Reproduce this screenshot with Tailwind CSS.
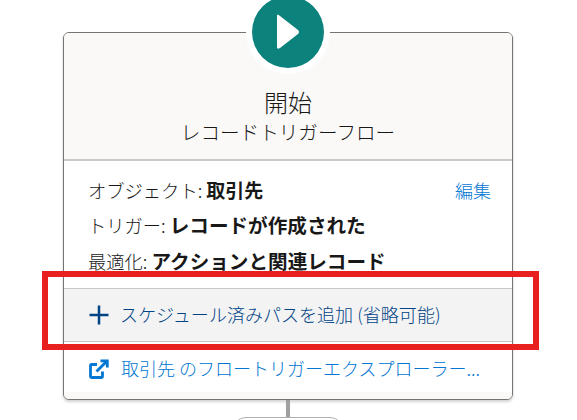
<!DOCTYPE html>
<html lang="ja">
<head>
<meta charset="utf-8">
<script src="https://cdn.jsdelivr.net/npm/@tailwindcss/browser@4"></script>
</head>
<body class="bg-white">
<div class="relative w-[577px] h-[420px] overflow-hidden bg-white text-[#181818] font-['Noto_Sans_CJK_JP','Noto_Sans',sans-serif]">
  <div class="pt-8 pl-[63px]">
    <div class="w-[450px] h-[368px] rounded-md border border-[#747474] bg-white shadow-[0_2px_3px_rgba(0,0,0,0.18)] overflow-hidden flex flex-col">
      <div class="h-[128px] shrink-0 bg-[#faf9f7] border-b-2 border-[#c9c9c9] flex flex-col items-center pt-[54px]">
        <div class="text-[24px] leading-[30px] font-light">開始</div>
        <div class="text-[19.6px] leading-[29px] font-light">レコードトリガーフロー</div>
      </div>
      <div class="h-[127px] shrink-0 pl-6 pr-[21px] pt-[12px] flex flex-col">
        <div class="flex justify-between items-center h-[34px]">
          <div class="text-[18.3px] font-light">オブジェクト: <b class="font-bold text-[19px]">取引先</b></div>
          <span class="text-[18px] text-[#0176d3] font-light">編集</span>
        </div>
        <div class="text-[18.3px] h-[35px] leading-[35px] font-light">トリガー: <b class="font-bold text-[19.6px]">レコードが作成された</b></div>
        <div class="text-[18.3px] h-[35px] leading-[37px] font-light">最適化: <b class="font-bold text-[19.6px]">アクションと関連レコード</b></div>
      </div>
      <div class="h-[54px] shrink-0 bg-[#f3f3f3] border-y border-[#c9c9c9] flex items-center pl-[25px] gap-[11px] text-[#014486]">
        <svg class="w-5 h-5 shrink-0" viewBox="0 0 20 20"><path d="M10 .5v19M.5 10h19" stroke="#014486" stroke-width="2.5" fill="none"/></svg>
        <span class="text-[18.05px] font-light">スケジュール済みパスを追加 (省略可能)</span>
      </div>
      <div class="flex-1 flex items-start pl-[25px] pt-[13px] gap-[12px] text-[#0176d3]">
        <svg class="w-5 h-5 mt-[4px] shrink-0" viewBox="0 0 20 20" fill="none" stroke="#0176d3" stroke-width="2.8"><path d="M8 5.5H2.5a1 1 0 0 0-1 1v11a1 1 0 0 0 1 1h10a1 1 0 0 0 1-1V12.5"/><path d="M7.5 12.5 17 3"/><path d="M11.5 1.8h6.8v6.8"/></svg>
        <span class="text-[18px] font-light">取引先 のフロートリガーエクスプローラー...</span>
      </div>
      <div class="h-[7px] shrink-0 bg-[#faf9f7]"></div>
    </div>
    <div class="w-[4px] h-[18px] bg-[#a0a0a0] ml-[223px]"></div>
  </div>

  <div class="absolute left-[232px] top-[417px] w-[112px] h-8 rounded-t-[14px] border border-[#b0b0b0] bg-white"></div>

  <div class="absolute left-[246px] top-[-10px] w-[84px] h-[84px] rounded-full bg-white flex items-center justify-center">
    <div class="w-[72px] h-[72px] rounded-full bg-[#0b827c]">
      <svg class="w-[72px] h-[72px]" viewBox="0 0 72 72"><path d="M25 20 L25 51 Q25 54 28 52 L46 38 Q48 36 46 34 L28 20 Q25 17 25 20Z" fill="#fff"/></svg>
    </div>
  </div>

  <div class="absolute left-[42px] top-[271px] w-[497px] h-[79px] border-[6px] border-[#e8201f]"></div>
</div>
</body>
</html>
